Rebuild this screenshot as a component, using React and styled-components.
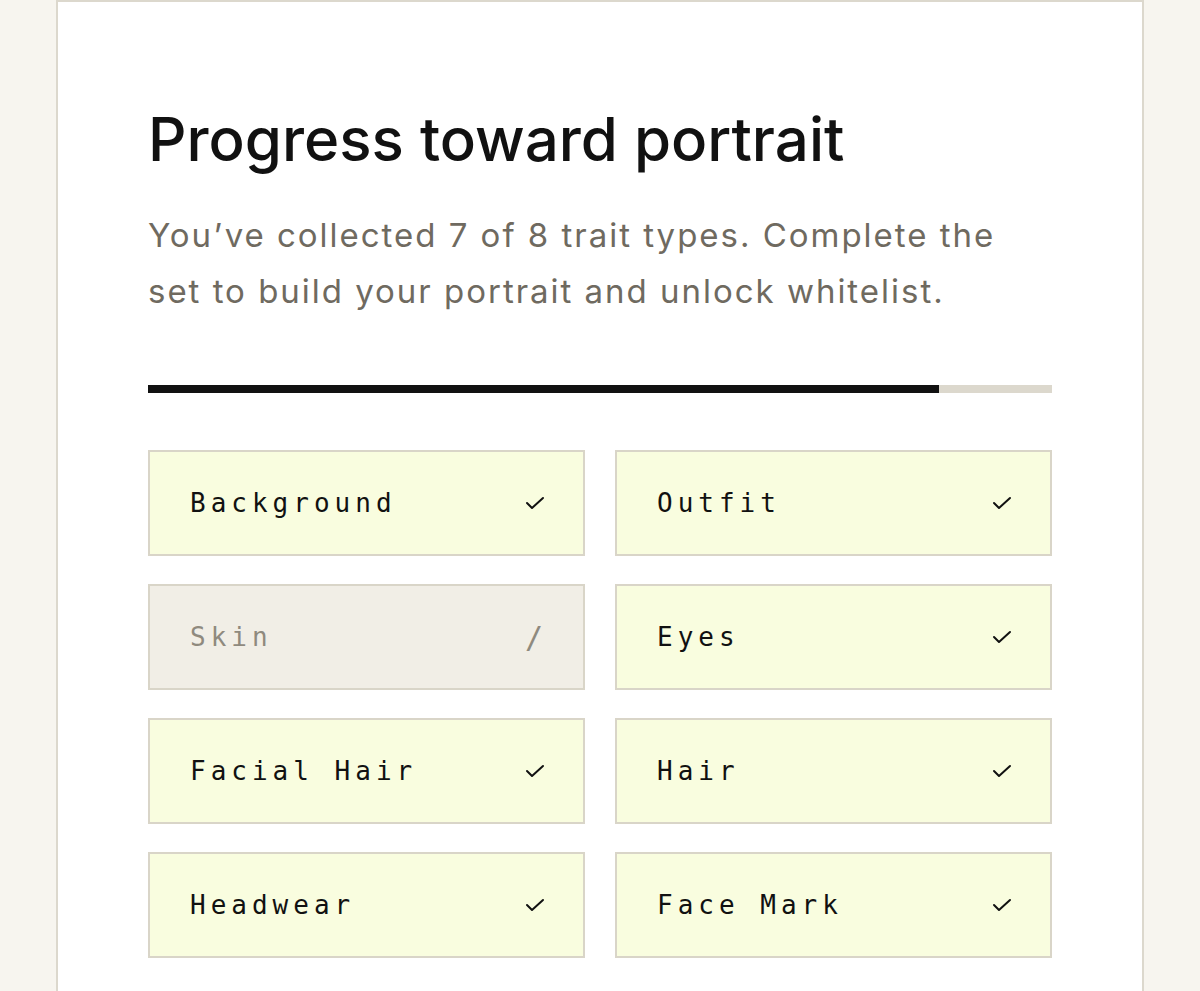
import React from 'react';
import styled, { createGlobalStyle } from 'styled-components';

const traits = [
  { name: 'Background', done: true },
  { name: 'Outfit', done: true },
  { name: 'Skin', done: false },
  { name: 'Eyes', done: true },
  { name: 'Facial Hair', done: true },
  { name: 'Hair', done: true },
  { name: 'Headwear', done: true },
  { name: 'Face Mark', done: true },
];

const GlobalStyle = createGlobalStyle`
  html, body {
    margin: 0;
    padding: 0;
    background: #f7f5ef;
  }
`;

const CheckIcon = () => (
  <svg width="20" height="14" viewBox="0 0 20 14" fill="none">
    <path d="M2 7l5 5L18 2" stroke="#111" strokeWidth="2" strokeLinecap="round" strokeLinejoin="round" />
  </svg>
);

const App = () => {
  const collected = traits.filter((t) => t.done).length;
  const summary = `You’ve collected ${collected} of ${traits.length} trait types. Complete the set to build your portrait and unlock whitelist.`;

  return (
    <>
      <GlobalStyle />
      <Page>
        <Card>
          <Title>Progress toward portrait</Title>
          <Subtitle>{summary}</Subtitle>
          <Track>
            <Fill style={{ width: `${(collected / traits.length) * 100}%` }} />
          </Track>
          <TraitGrid>
            {traits.map((t) => (
              <Trait key={t.name} $done={t.done}>
                <TraitName>{t.name}</TraitName>
                {t.done ? <CheckIcon /> : <Slash>/</Slash>}
              </Trait>
            ))}
          </TraitGrid>
        </Card>
      </Page>
    </>
  );
};

const Page = styled.div`
  padding-left: 56px;
  min-height: 991px;
`;

const Card = styled.section`
  box-sizing: border-box;
  width: 1088px;
  min-height: 1000px;
  background: #fff;
  border: 2px solid #dcd8cd;
  padding: 102px 90px 40px;
`;

const Title = styled.h2`
  margin: 0;
  font-family: Inter, "Noto Sans", sans-serif;
  font-weight: 500;
  font-size: 60px;
  line-height: 70px;
  color: #111;
`;

const Subtitle = styled.p`
  margin: 33px 0 0;
  max-width: 870px;
  font-family: Inter, "Noto Sans", sans-serif;
  font-size: 33px;
  line-height: 56px;
  letter-spacing: 0.06em;
  color: #6f6a60;
`;

const Track = styled.div`
  margin-top: 66px;
  height: 8px;
  background: #dcd8cd;
`;

const Fill = styled.div`
  height: 100%;
  background: #111;
`;

const TraitGrid = styled.div`
  margin-top: 57px;
  display: grid;
  grid-template-columns: 1fr 1fr;
  column-gap: 30px;
  row-gap: 28px;
`;

const Trait = styled.div`
  box-sizing: border-box;
  height: 106px;
  display: flex;
  align-items: center;
  justify-content: space-between;
  padding: 0 38px 0 40px;
  border: 2px solid #d9d5c8;
  background: ${(p) => (p.$done ? '#f9fddf' : '#f1eee6')};
  color: ${(p) => (p.$done ? '#111' : '#8f8a7e')};
`;

const TraitName = styled.span`
  font-family: "DejaVu Sans Mono", "Liberation Mono", monospace;
  font-size: 26px;
  letter-spacing: 5px;
`;

const Slash = styled.span`
  font-family: "DejaVu Sans Mono", "Liberation Mono", monospace;
  font-size: 30px;
  margin-right: 2px;
`;

export default App;
